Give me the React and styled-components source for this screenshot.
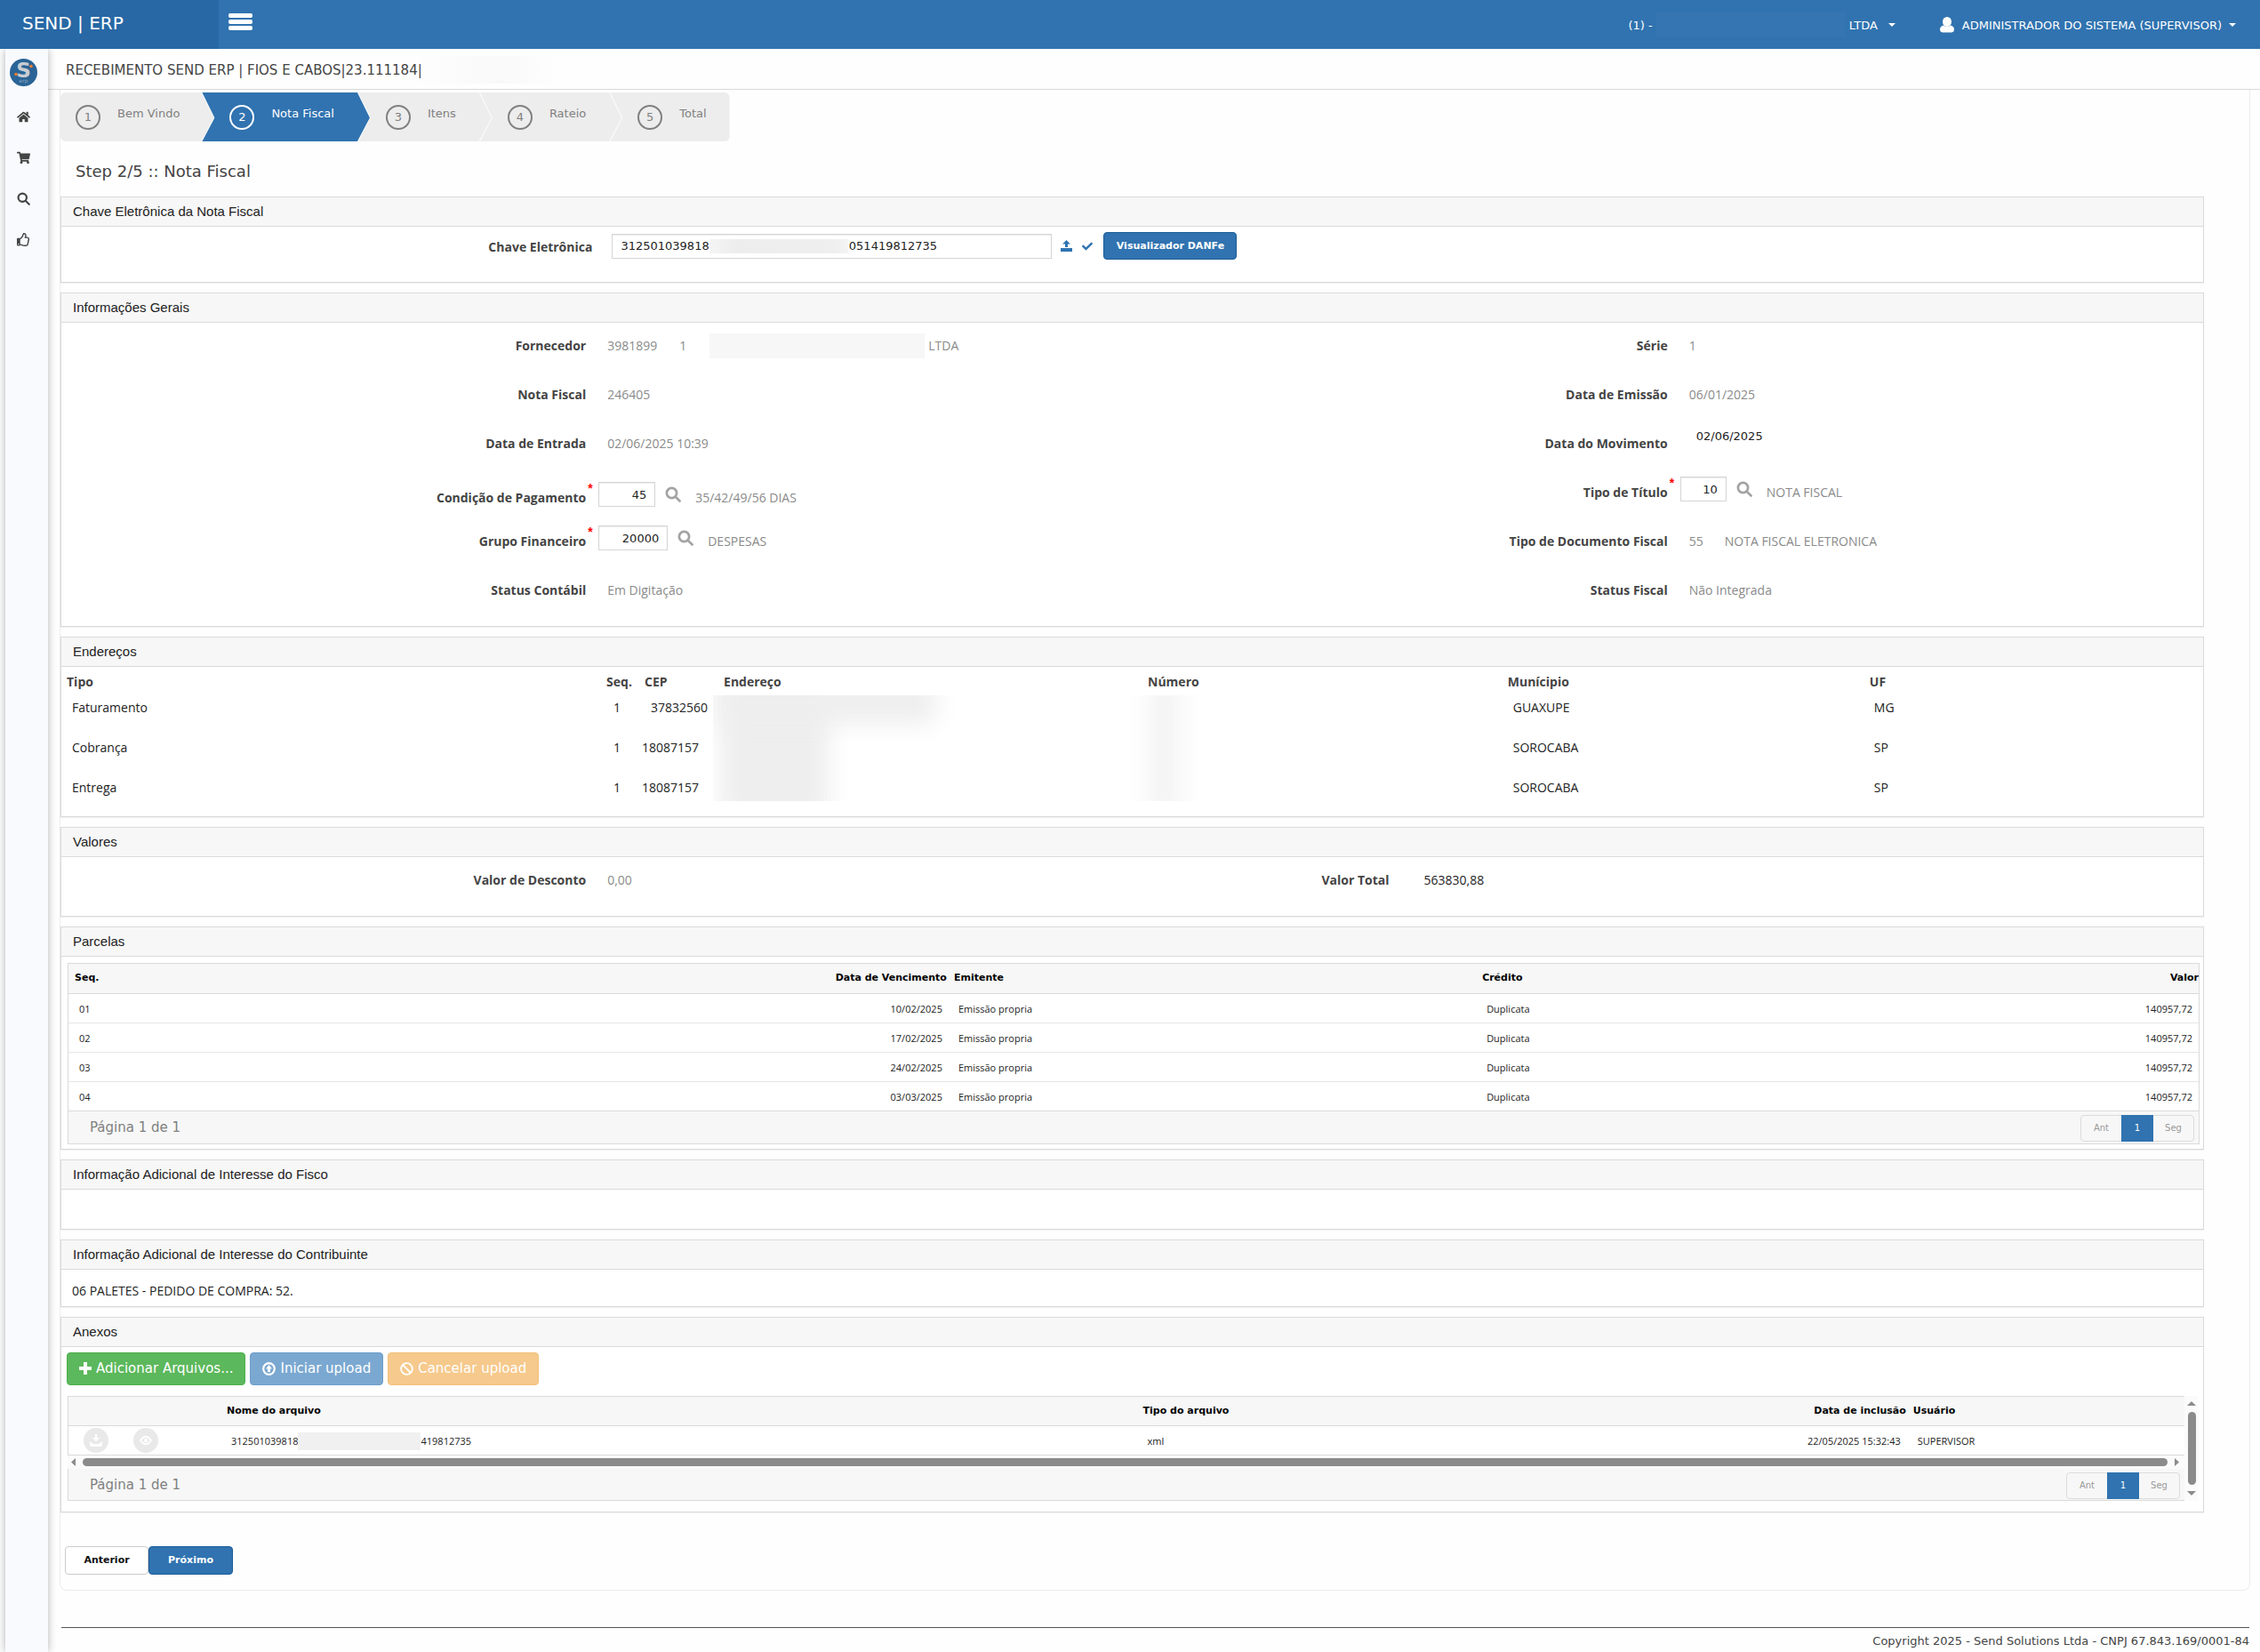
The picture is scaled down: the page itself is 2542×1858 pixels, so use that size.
import React from "react";
import styled, { createGlobalStyle, css } from "styled-components";
import { FaHome, FaShoppingCart, FaRegThumbsUp, FaCheck, FaBan } from "react-icons/fa";

const verdana = '"DejaVu Sans", Verdana, sans-serif';
const trebuchet = '"Open Sans", "Trebuchet MS", sans-serif';
const arial = '"Liberation Sans", Arial, sans-serif';

const blue = "#3073b0";
const line = "#dadada";
const soft = "#f7f7f7";

const GlobalStyle = createGlobalStyle`
  *, *::before, *::after { box-sizing: border-box; }
  body { margin: 0; background: #fefefe; color: #444; font-family: ${verdana}; font-size: 13px; }
  button, input { font-family: inherit; }
  table { border-collapse: collapse; border-spacing: 0; }
`;

const Page = styled.div`
  display: flex;
  flex-direction: column;
  min-height: 100vh;
`;

const TopBar = styled.header`
  display: flex;
  align-items: stretch;
  height: 55px;
  background: ${blue};
  color: #fff;
`;
const Brand = styled.a`
  width: 246px;
  padding: 14px 0 0 25px;
  background: #2768a5;
  color: #fff;
  font-size: 20px;
  line-height: 24px;
  text-decoration: none;
  font-family: ${verdana};
`;
const MenuButton = styled.button`
  display: flex;
  flex-direction: column;
  gap: 2px;
  width: 49px;
  padding: 15px 11px 0;
  border: 0;
  background: none;
`;
const MenuBar = styled.span`
  height: 5px;
  border-radius: 2px;
  background: #fff;
`;
const TopRight = styled.nav`
  display: flex;
  align-items: flex-start;
  margin-left: auto;
  padding: 14px 27px 0 0;
`;
const TopLink = styled.button`
  display: flex;
  align-items: center;
  height: 28px;
  padding: 0;
  margin-left: ${(p) => p.$lead || 0}px;
  border: 0;
  background: none;
  color: #fff;
  font-size: 13px;
`;
const Caret = styled.span`
  margin-left: ${(p) => p.$lead}px;
  border: 4px solid transparent;
  border-top-color: #fff;
  border-bottom: 0;
`;
const Redacted = styled.span`
  flex: none;
  display: inline-block;
  width: ${(p) => p.$w}px;
  height: ${(p) => p.$h}px;
  margin: ${(p) => p.$bleed || 0}px ${(p) => p.$gap || 0}px;
  background: ${(p) => p.$tone || "#f0f0f0"};
`;
const UserGlyph = styled.svg`
  width: 16px;
  height: 18px;
  margin-right: 9px;
`;

const Body = styled.div`
  display: flex;
  flex: 1;
  padding-left: 6px;
  background: #fefefe;
`;
const Sidebar = styled.aside`
  display: flex;
  flex-direction: column;
  align-items: center;
  width: 48px;
  padding: 11px 8px 0 0;
  background: #f9fafd;
  box-shadow: 0 0 9px rgba(0, 0, 0, 0.3);
  clip-path: inset(0 -12px 0 -12px);
`;
const Logo = styled.svg`
  width: 31px;
  height: 31px;
  margin-bottom: 11px;
`;
const SideLink = styled.a`
  display: flex;
  align-items: center;
  justify-content: center;
  width: 40px;
  height: 46px;
  color: #444;
  font-size: 15px;
`;

const Main = styled.main`
  flex: 1;
  min-width: 0;
`;
const TitleBar = styled.div`
  display: flex;
  align-items: center;
  height: 46px;
  padding: 2px 0 0 20px;
  border-bottom: 1px solid #d9d9d9;
`;
const PageTitle = styled.h1`
  margin: 0;
  font-size: 15px;
  font-weight: 400;
  line-height: 24px;
`;
const Content = styled.section`
  margin: 0 11px 0 13px;
  padding: 3px 51px 17px 0;
  border: 1px solid #ececec;
  border-top: 0;
  border-radius: 0 0 8px 8px;
`;

const Steps = styled.ol`
  display: flex;
  width: fit-content;
  margin: 0;
  padding: 0;
  list-style: none;
  border-radius: 6px;
  overflow: hidden;
`;
const first = "polygon(0 0, calc(100% - 14px) 0, 100% 52%, calc(100% - 14px) 100%, 0 100%)";
const middle =
  "polygon(0 0, calc(100% - 14px) 0, 100% 52%, calc(100% - 14px) 100%, 0 100%, 14px 52%)";
const last = "polygon(0 0, 100% 0, 100% 100%, 0 100%, 14px 52%)";
const Step = styled.li`
  display: flex;
  align-items: center;
  gap: 19px;
  height: 55px;
  padding: 0 40px 0 31px;
  margin-left: -13px;
  background: ${(p) => (p.$active ? blue : "#ededed")};
  color: ${(p) => (p.$active ? "#fff" : "#808080")};
  clip-path: ${middle};
  font-size: 13px;
  &:first-child { margin-left: 0; padding: 0 38px 0 17px; clip-path: ${first}; }
  &:last-child { padding-right: 26px; clip-path: ${last}; }
`;
const StepNumber = styled.span`
  display: flex;
  align-items: center;
  justify-content: center;
  width: 28px;
  height: 28px;
  border: 2px solid currentColor;
  border-radius: 50%;
`;
const StepName = styled.span`
  padding-bottom: 8px;
`;
const StepTitle = styled.h2`
  margin: 0;
  padding: 21px 0 15px 17px;
  font-size: 18px;
  font-weight: 400;
  line-height: 26px;
`;

const Panel = styled.section`
  margin-bottom: 11px;
  border: 1px solid ${line};
  background: #fff;
  box-shadow: 0 1px 1px rgba(0, 0, 0, 0.05);
`;
const PanelTitle = styled.h3`
  height: 33px;
  margin: 0;
  padding: 0 0 0 13px;
  border-bottom: 1px solid ${line};
  background: ${soft};
  color: #222;
  font: 400 15px/32px ${arial};
`;
const PanelBody = styled.div`
  min-height: ${(p) => p.$h}px;
  padding: ${(p) => p.$pad || "0"};
`;

const labelText = css`
  color: #444;
  font: 700 14px/20px ${trebuchet};
`;
const KeyRow = styled.div`
  display: flex;
  align-items: center;
  height: 31px;
`;
const KeyLabel = styled.label`
  ${labelText}
  width: 24.8%;
  margin-right: 22px;
  padding-top: 2px;
  text-align: right;
`;
const KeyBox = styled.div`
  position: relative;
  width: 20.55%;
`;
const TextInput = styled.input`
  width: 100%;
  height: 28px;
  padding: 0 9px;
  border: 1px solid ${(p) => (p.$plain ? "transparent" : "#d5d5d5")};
  outline: 0;
  background: #fff;
  box-shadow: ${(p) => (p.$plain ? "none" : "inset 0 1px 1px rgba(0, 0, 0, 0.08)")};
  color: #222;
  font: 400 13px ${verdana};
`;
const KeyMask = styled.span`
  position: absolute;
  top: 6px;
  left: 110px;
  width: 156px;
  height: 16px;
  background: linear-gradient(90deg, #f5f5f5, #ededed 20%, #efefef 90%, #f4f4f4);
`;
const IconButton = styled.button`
  display: flex;
  padding: 0;
  margin-left: ${(p) => p.$lead}px;
  border: 0;
  background: none;
  color: ${(p) => p.$color || blue};
`;
const ActionButton = styled.button`
  height: ${(p) => p.$h || 32}px;
  min-width: ${(p) => p.$w}px;
  margin-left: ${(p) => p.$lead || 0}px;
  padding: 0 10px 1px;
  border: 1px solid ${(p) => (p.$primary ? "#1c5c98" : "#ccc")};
  border-radius: 4px;
  background: ${(p) => (p.$primary ? blue : "#fff")};
  color: ${(p) => (p.$primary ? "#fff" : "#111")};
  font: 700 11px ${verdana};
`;

const FieldGrid = styled.div`
  display: grid;
  grid-template-columns: ${(p) => p.$cols};
  grid-auto-rows: 55px;
`;
const FieldName = styled.label`
  ${labelText}
  padding-top: ${(p) => (p.$low ? 22 : 16)}px;
  text-align: right;
`;
const FieldValue = styled.div`
  display: flex;
  align-items: flex-start;
  padding: 16px 0 0 ${(p) => p.$lead || 24}px;
  color: ${(p) => (p.$dark ? "#222" : "#8a8a8a")};
  font: 400 14px/20px ${trebuchet};
  white-space: nowrap;
`;
const Note = styled.p`
  margin: 0;
  padding: 14px 12px 0;
  color: #222;
  font: 400 14px/20px ${trebuchet};
`;
const InputCell = styled.div`
  display: flex;
  align-items: center;
  height: 28px;
  margin-top: ${(p) => p.$top ?? 8}px;
`;
const Required = styled.span`
  align-self: flex-start;
  width: ${(p) => (p.$open ? 22 : 14)}px;
  padding-left: 2px;
  color: #f00;
  font: 700 14px/14px ${arial};
`;
const NumberBox = styled.div`
  width: ${(p) => p.$w}px;
  input { text-align: ${(p) => p.$align || "right"}; }
`;
const Description = styled.span`
  margin-left: 16px;
  padding-top: 8px;
  color: #8a8a8a;
  font: 400 14px/20px ${trebuchet};
`;
const Spaced = styled.span`
  margin-right: ${(p) => p.$gap}px;
`;

const AddressTable = styled.table`
  width: 100%;
  table-layout: fixed;
  color: #222;
  font: 400 14px/20px ${trebuchet};
  th { ${labelText} height: 29px; padding: 7px 0 2px 6px; text-align: left; }
  td { height: 45px; padding: 7px 0 0 12px; vertical-align: top; }
  td:nth-child(2) { padding-left: 14px; }
  td:nth-child(7) { padding-left: 11px; }
`;
const CepCell = styled.td`
  && { padding-left: ${(p) => (p.$first ? 13 : 3)}px; }
`;
const MaskCell = styled.td`
  position: relative;
`;
const BlurMask = styled.span`
  position: absolute;
  top: 3px;
  left: ${(p) => (p.$narrow ? -22 : -6)}px;
  width: ${(p) => (p.$narrow ? 90 : 290)}px;
  height: 119px;
  overflow: hidden;
  &::before, &::after {
    content: "";
    position: absolute;
    filter: blur(13px);
    background: ${(p) => (p.$narrow ? "#f3f3f3" : "#eeeeee")};
  }
  &::before {
    top: -20px;
    left: ${(p) => (p.$narrow ? 30 : 8)}px;
    width: ${(p) => (p.$narrow ? 34 : 122)}px;
    height: 160px;
  }
  &::after {
    display: ${(p) => (p.$narrow ? "none" : "block")};
    top: -16px;
    left: 8px;
    width: 242px;
    height: 48px;
  }
`;

const Frame = styled.div`
  border: 1px solid ${line};
`;
const DataTable = styled.table`
  width: 100%;
  table-layout: fixed;
  color: #222;
  font: 400 11px/16px ${trebuchet};
  thead tr { background: ${soft}; border-bottom: 1px solid ${line}; }
  tbody tr { border-bottom: 1px solid #e6e6e6; }
  tbody tr:last-child { border-bottom-color: ${line}; }
  th { height: 33px; padding: 0; color: #000; font: 700 11px/16px ${verdana}; text-align: left; }
  td { height: 33px; padding: 2px 0 0; }
`;
const Th = styled.th`
  && { padding-left: ${(p) => p.$lead ?? 4}px; padding-right: ${(p) => p.$tail || 0}px; text-align: ${(p) => (p.$end ? "right" : "left")}; }
`;
const Td = styled.td`
  && { padding-left: ${(p) => p.$lead ?? 9}px; padding-right: ${(p) => p.$tail || 0}px; text-align: ${(p) => (p.$end ? "right" : "left")}; }
`;
const TableFooter = styled.div`
  display: flex;
  align-items: center;
  justify-content: space-between;
  height: ${(p) => p.$h}px;
  padding: 0 ${(p) => p.$tail}px 0 24px;
  background: ${soft};
  color: #808080;
  font-size: 15px;
`;
const Pager = styled.div`
  display: flex;
  height: 30px;
  margin-top: 2px;
  border: 1px solid #dcdcdc;
  border-radius: 4px;
`;
const PageButton = styled.button`
  width: ${(p) => (p.$current ? 36 : 45)}px;
  margin: ${(p) => (p.$current ? "-1px 0" : "0")};
  padding: 0;
  border: 0;
  background: ${(p) => (p.$current ? blue : "transparent")};
  color: ${(p) => (p.$current ? "#fff" : "#999")};
  font-size: 10px;
`;

const Uploads = styled.div`
  display: flex;
  gap: 5px;
  margin: 0 0 12px -1px;
`;
const tones = {
  green: ["#5cb85c", "#4cae4c"],
  blue: ["#7ba8d1", "#6f9fca"],
  orange: ["#f6c98c", "#f4c07b"],
};
const UploadButton = styled.button`
  display: flex;
  align-items: center;
  gap: 5px;
  height: 37px;
  padding: 0 13px;
  border: 1px solid ${(p) => tones[p.$tone][1]};
  border-radius: 4px;
  background: ${(p) => tones[p.$tone][0]};
  color: #fff;
  font-size: 15px;
  font-weight: 400;
`;
const ScrollArea = styled.div`
  display: grid;
  grid-template-columns: minmax(0, 1fr) 16px;
  padding-right: 1px;
`;
const ScrollFrame = styled(Frame)`
  border-right: 0;
`;
const HTrack = styled.div`
  display: flex;
  align-items: center;
  gap: 8px;
  height: 15px;
  margin-left: -1px;
  padding: 0 6px 0 4px;
  background: #fbfbfb;
`;
const HThumb = styled.div`
  flex: 1;
  height: 9px;
  border-radius: 5px;
  background: #8b8b8b;
`;
const VTrack = styled.div`
  display: flex;
  flex-direction: column;
  align-items: center;
  gap: 7px;
  padding: 6px 0;
  background: #fbfbfb;
`;
const VThumb = styled.div`
  flex: 1;
  width: 9px;
  border-radius: 5px;
  background: #8b8b8b;
`;
const Arrow = styled.svg`
  flex: none;
  width: ${(p) => (p.$flat ? 10 : 5)}px;
  height: ${(p) => (p.$flat ? 5 : 9)}px;
  fill: #8b8b8b;
`;
const RowIcons = styled.div`
  display: flex;
  gap: 28px;
  margin-top: -2px;
`;
const RoundButton = styled.button`
  display: flex;
  align-items: center;
  justify-content: center;
  width: 28px;
  height: 28px;
  padding: 0;
  border: 0;
  border-radius: 50%;
  background: #e9e9e9;
  color: #fff;
`;
const FileName = styled.span`
  display: flex;
  align-items: center;
  height: 20px;
`;
const WizardNav = styled.div`
  display: flex;
  margin-top: 38px;
  padding-left: 5px;
`;
const PageFooter = styled.footer`
  margin: 41px 12px 0 15px;
  padding-top: 6px;
  border-top: 1px solid #555;
  font-size: 13px;
  line-height: 17px;
  text-align: right;
`;

const SearchIcon = ({ size = 18, width = 4 }) => (
  <svg width={size} height={size} viewBox="0 0 24 24" fill="none" stroke="currentColor" strokeWidth={width}>
    <circle cx="10" cy="10" r="7.5" />
    <path d="M15.5 15.5 22 22" strokeLinecap="round" />
  </svg>
);
const UploadIcon = () => (
  <svg width="13" height="13" viewBox="0 0 13 13" fill="currentColor">
    <path d="M6.5 0 11 4.6H8V8H5V4.600H2z" />
    <path d="M0 9h13v4H0z" />
  </svg>
);
const DownloadIcon = () => (
  <svg width="14" height="14" viewBox="0 0 14 14" fill="currentColor">
    <path d="M6 0h2v4h3L7 8.500 3 4h3z" />
    <path d="M0 9h2l1 2h8l1-2h2v3q0 2-2 2H2q-2 0-2-2z" />
  </svg>
);
const EyeIcon = () => (
  <svg width="14" height="12" viewBox="0 0 14 12" fill="none" stroke="currentColor">
    <path d="M1 6Q7-2.500 13 6 7 14.500 1 6z" strokeWidth="2" />
    <circle cx="7" cy="6" r="2.200" fill="currentColor" stroke="none" />
  </svg>
);
const PlusIcon = () => (
  <svg width="14" height="14" viewBox="0 0 14 14" fill="currentColor">
    <path d="M5 0h4v5h5v4H9v5H5V9H0V5h5z" />
  </svg>
);
const UpCircleIcon = () => (
  <svg width="15" height="15" viewBox="0 0 15 15" fill="none" stroke="currentColor">
    <circle cx="7.500" cy="7.500" r="6.300" strokeWidth="2.200" />
    <path d="M7.500 3 11 7.500H9V11H6V7.500H4z" fill="currentColor" stroke="none" />
  </svg>
);

const steps = ["Bem Vindo", "Nota Fiscal", "Itens", "Rateio", "Total"];
const addresses = [
  ["Faturamento", "1", "37832560", "GUAXUPE", "MG"],
  ["Cobrança", "1", "18087157", "SOROCABA", "SP"],
  ["Entrega", "1", "18087157", "SOROCABA", "SP"],
];
const installments = [
  ["01", "10/02/2025"],
  ["02", "17/02/2025"],
  ["03", "24/02/2025"],
  ["04", "03/03/2025"],
];

function Pagination({ h, tail }) {
  return (
    <TableFooter $h={h} $tail={tail}>
      <span>Página 1 de 1</span>
      <Pager>
        <PageButton type="button">Ant</PageButton>
        <PageButton type="button" $current>1</PageButton>
        <PageButton type="button">Seg</PageButton>
      </Pager>
    </TableFooter>
  );
}

function Lookup({ id, value, w, top, text }) {
  return (
    <InputCell $top={top}>
      <Required>*</Required>
      <NumberBox $w={w}>
        <TextInput id={id} defaultValue={value} />
      </NumberBox>
      <IconButton type="button" $lead={11} $color="#a3a3a3" aria-label="Pesquisar">
        <SearchIcon size={18} width={3.6} />
      </IconButton>
      <Description>{text}</Description>
    </InputCell>
  );
}

export default function App() {
  return (
    <Page>
      <GlobalStyle />
      <TopBar>
        <Brand href="#">SEND | ERP</Brand>
        <MenuButton type="button" aria-label="Menu">
          <MenuBar />
          <MenuBar />
          <MenuBar />
        </MenuButton>
        <TopRight>
          <TopLink type="button">
            (1) -
            <Redacted $w={213} $h={28} $gap={4} $tone="#3575b2" />
            LTDA
            <Caret $lead={12} />
          </TopLink>
          <TopLink type="button" $lead={50}>
            <UserGlyph viewBox="0 0 16 18" fill="#fff">
              <ellipse cx="8" cy="5.500" rx="5" ry="5.500" />
              <path d="M4 9.500Q0 10.500 0 14q0 3 3 3.500h10q3-.5 3-3.500 0-3.500-4-4.500-4 3-8 0z" />
            </UserGlyph>
            ADMINISTRADOR DO SISTEMA (SUPERVISOR)
            <Caret $lead={8} />
          </TopLink>
        </TopRight>
      </TopBar>
      <Body>
        <Sidebar>
          <Logo viewBox="0 0 31 31" aria-label="Send ERP">
            <circle cx="15.500" cy="15.500" r="15.500" fill="#2a6496" />
            <text x="15.500" y="21" textAnchor="middle" fontFamily="DejaVu Sans" fontWeight="700" fontSize="23" fill="#c9ccd3">S</text>
            <circle cx="24" cy="8.500" r="1.800" fill="#f07c2e" />
            <circle cx="7" cy="17.500" r="1.800" fill="#f07c2e" />
            <text x="15.500" y="27" textAnchor="middle" fontFamily="DejaVu Sans" fontSize="6" fill="#8fa9c4">erp</text>
          </Logo>
          <SideLink href="#" aria-label="Início"><FaHome /></SideLink>
          <SideLink href="#" aria-label="Compras"><FaShoppingCart /></SideLink>
          <SideLink href="#" aria-label="Pesquisar"><SearchIcon size={15} width={3.5} /></SideLink>
          <SideLink href="#" aria-label="Aprovar"><FaRegThumbsUp /></SideLink>
        </Sidebar>
        <Main>
          <TitleBar>
            <PageTitle>RECEBIMENTO SEND ERP | FIOS E CABOS|23.111184|</PageTitle>
            <Redacted $w={146} $h={31} $tone="linear-gradient(90deg, #fdfdfd, #f9f9f9 60%, #fdfdfd)" />
          </TitleBar>
          <Content>
            <Steps>
              {steps.map((name, i) => (
                <Step key={name} $active={i === 1}>
                  <StepNumber>{i + 1}</StepNumber>
                  <StepName>{name}</StepName>
                </Step>
              ))}
            </Steps>
            <StepTitle>Step 2/5 :: Nota Fiscal</StepTitle>

            <Panel>
              <PanelTitle>Chave Eletrônica da Nota Fiscal</PanelTitle>
              <PanelBody $h={62} $pad="6px 0 0">
                <KeyRow>
                  <KeyLabel htmlFor="chave">Chave Eletrônica</KeyLabel>
                  <KeyBox>
                    <TextInput
                      id="chave"
                      defaultValue={"312501039818" + "\u2007".repeat(19) + "051419812735"}
                    />
                    <KeyMask />
                  </KeyBox>
                  <IconButton type="button" $lead={10} aria-label="Enviar"><UploadIcon /></IconButton>
                  <IconButton type="button" $lead={11} aria-label="Validar"><FaCheck size={12} /></IconButton>
                  <ActionButton type="button" $primary $h={31} $w={150} $lead={12}>Visualizador DANFe</ActionButton>
                </KeyRow>
              </PanelBody>
            </Panel>

            <Panel>
              <PanelTitle>Informações Gerais</PanelTitle>
              <PanelBody $h={341}>
                <FieldGrid $cols="24.5% 25.5% 25% 25%">
                  <FieldName as="span">Fornecedor</FieldName>
                  <FieldValue>
                    <Spaced $gap={25}>3981899</Spaced>
                    <Spaced $gap={22}>1</Spaced>
                    <Redacted $w={242} $h={28} $gap={4} $bleed={-4} $tone="#f7f7f7" />
                    LTDA
                  </FieldValue>
                  <FieldName as="span">Série</FieldName>
                  <FieldValue>1</FieldValue>

                  <FieldName as="span">Nota Fiscal</FieldName>
                  <FieldValue>246405</FieldValue>
                  <FieldName as="span">Data de Emissão</FieldName>
                  <FieldValue>06/01/2025</FieldValue>

                  <FieldName as="span">Data de Entrada</FieldName>
                  <FieldValue>02/06/2025 10:39</FieldValue>
                  <FieldName htmlFor="movimento">Data do Movimento</FieldName>
                  <InputCell $top={3}>
                    <Required $open />
                    <NumberBox $w={120} $align="left">
                      <TextInput id="movimento" $plain defaultValue="02/06/2025" />
                    </NumberBox>
                  </InputCell>

                  <FieldName $low htmlFor="condicao">Condição de Pagamento</FieldName>
                  <Lookup top={14} id="condicao" value="45" w={64} text="35/42/49/56 DIAS" />
                  <FieldName htmlFor="titulo">Tipo de Título</FieldName>
                  <Lookup id="titulo" value="10" w={52} text="NOTA FISCAL" />

                  <FieldName htmlFor="grupo">Grupo Financeiro</FieldName>
                  <Lookup id="grupo" value="20000" w={78} text="DESPESAS" />
                  <FieldName as="span">Tipo de Documento Fiscal</FieldName>
                  <FieldValue>
                    <Spaced $gap={24}>55</Spaced>
                    NOTA FISCAL ELETRONICA
                  </FieldValue>

                  <FieldName as="span">Status Contábil</FieldName>
                  <FieldValue>Em Digitação</FieldValue>
                  <FieldName as="span">Status Fiscal</FieldName>
                  <FieldValue>Não Integrada</FieldValue>
                </FieldGrid>
              </PanelBody>
            </Panel>

            <Panel>
              <PanelTitle>Endereços</PanelTitle>
              <PanelBody $h={168}>
                <AddressTable>
                  <colgroup>
                    <col style={{ width: "25.2%" }} />
                    <col style={{ width: 43 }} />
                    <col style={{ width: 89 }} />
                    <col style={{ width: "19.8%" }} />
                    <col style={{ width: "16.8%" }} />
                    <col style={{ width: "16.9%" }} />
                    <col />
                  </colgroup>
                  <thead>
                    <tr>
                      <th>Tipo</th>
                      <th>Seq.</th>
                      <th>CEP</th>
                      <th>Endereço</th>
                      <th>Número</th>
                      <th>Munícipio</th>
                      <th>UF</th>
                    </tr>
                  </thead>
                  <tbody>
                    {addresses.map(([tipo, seq, cep, city, uf], i) => (
                      <tr key={tipo}>
                        <td>{tipo}</td>
                        <td>{seq}</td>
                        <CepCell $first={i === 0}>{cep}</CepCell>
                        <MaskCell>{i === 0 && <BlurMask />}</MaskCell>
                        <MaskCell>{i === 0 && <BlurMask $narrow />}</MaskCell>
                        <td>{city}</td>
                        <td>{uf}</td>
                      </tr>
                    ))}
                  </tbody>
                </AddressTable>
              </PanelBody>
            </Panel>

            <Panel>
              <PanelTitle>Valores</PanelTitle>
              <PanelBody $h={66}>
                <FieldGrid $cols="24.5% 25.5% 12% 38%">
                  <FieldName as="span">Valor de Desconto</FieldName>
                  <FieldValue>0,00</FieldValue>
                  <FieldName as="span">Valor Total</FieldName>
                  <FieldValue $dark $lead={39}>563830,88</FieldValue>
                </FieldGrid>
              </PanelBody>
            </Panel>

            <Panel>
              <PanelTitle>Parcelas</PanelTitle>
              <PanelBody $h={215} $pad="7px 4px 5px 7px">
                <Frame>
                  <DataTable>
                    <colgroup>
                      <col style={{ width: "20%" }} />
                      <col style={{ width: "21.4%" }} />
                      <col style={{ width: "24.8%" }} />
                      <col style={{ width: "16.8%" }} />
                      <col />
                    </colgroup>
                    <thead>
                      <tr>
                        <Th $lead={7}>Seq.</Th>
                        <Th $end $tail={4}>Data de Vencimento</Th>
                        <Th>Emitente</Th>
                        <Th>Crédito</Th>
                        <Th $end>Valor</Th>
                      </tr>
                    </thead>
                    <tbody>
                      {installments.map(([seq, date]) => (
                        <tr key={seq}>
                          <Td $lead={12}>{seq}</Td>
                          <Td $end $tail={9}>{date}</Td>
                          <Td>Emissão propria</Td>
                          <Td>Duplicata</Td>
                          <Td $end $tail={7}>140957,72</Td>
                        </tr>
                      ))}
                    </tbody>
                  </DataTable>
                  <Pagination h={36} tail={5} />
                </Frame>
              </PanelBody>
            </Panel>

            <Panel>
              <PanelTitle>Informação Adicional de Interesse do Fisco</PanelTitle>
              <PanelBody $h={44} />
            </Panel>

            <Panel>
              <PanelTitle>Informação Adicional de Interesse do Contribuinte</PanelTitle>
              <PanelBody $h={41}>
                <Note>06 PALETES - PEDIDO DE COMPRA: 52.</Note>
              </PanelBody>
            </Panel>

            <Panel>
              <PanelTitle>Anexos</PanelTitle>
              <PanelBody $h={185} $pad="6px 4px 12px 7px">
                <Uploads>
                  <UploadButton type="button" $tone="green"><PlusIcon />Adicionar Arquivos...</UploadButton>
                  <UploadButton type="button" $tone="blue"><UpCircleIcon />Iniciar upload</UploadButton>
                  <UploadButton type="button" $tone="orange"><FaBan size={15} />Cancelar upload</UploadButton>
                </Uploads>
                <ScrollArea>
                  <ScrollFrame>
                    <DataTable>
                      <colgroup>
                        <col style={{ width: 174 }} />
                        <col style={{ width: "43.3%" }} />
                        <col style={{ width: "24.8%" }} />
                        <col style={{ width: 276 }} />
                        <col />
                      </colgroup>
                      <thead>
                        <tr>
                          <Th aria-label="Ações" />
                          <Th>Nome do arquivo</Th>
                          <Th>Tipo do arquivo</Th>
                          <Th $end $tail={4}>Data de inclusão</Th>
                          <Th>Usuário</Th>
                        </tr>
                      </thead>
                      <tbody>
                        <tr>
                          <Td $lead={17}>
                            <RowIcons>
                              <RoundButton type="button" aria-label="Baixar"><DownloadIcon /></RoundButton>
                              <RoundButton type="button" aria-label="Visualizar"><EyeIcon /></RoundButton>
                            </RowIcons>
                          </Td>
                          <Td>
                            <FileName>
                              312501039818
                              <Redacted $w={138} $h={20} />
                              419812735
                            </FileName>
                          </Td>
                          <Td>xml</Td>
                          <Td $end $tail={10}>22/05/2025 15:32:43</Td>
                          <Td>SUPERVISOR</Td>
                        </tr>
                      </tbody>
                    </DataTable>
                    <HTrack>
                      <Arrow viewBox="0 0 5 9"><path d="M5 0v9L0 4.500z" /></Arrow>
                      <HThumb />
                      <Arrow viewBox="0 0 5 9"><path d="M0 0v9l5-4.500z" /></Arrow>
                    </HTrack>
                    <Pagination h={35} tail={5} />
                  </ScrollFrame>
                  <VTrack>
                    <Arrow $flat viewBox="0 0 10 5"><path d="M0 5h10L5 0z" /></Arrow>
                    <VThumb />
                    <Arrow $flat viewBox="0 0 10 5"><path d="M0 0h10L5 5z" /></Arrow>
                  </VTrack>
                </ScrollArea>
              </PanelBody>
            </Panel>

            <WizardNav>
              <ActionButton type="button" $w={94}>Anterior</ActionButton>
              <ActionButton type="button" $primary $w={95}>Próximo</ActionButton>
            </WizardNav>
          </Content>
          <PageFooter>Copyright 2025 - Send Solutions Ltda - CNPJ 67.843.169/0001-84</PageFooter>
        </Main>
      </Body>
    </Page>
  );
}
